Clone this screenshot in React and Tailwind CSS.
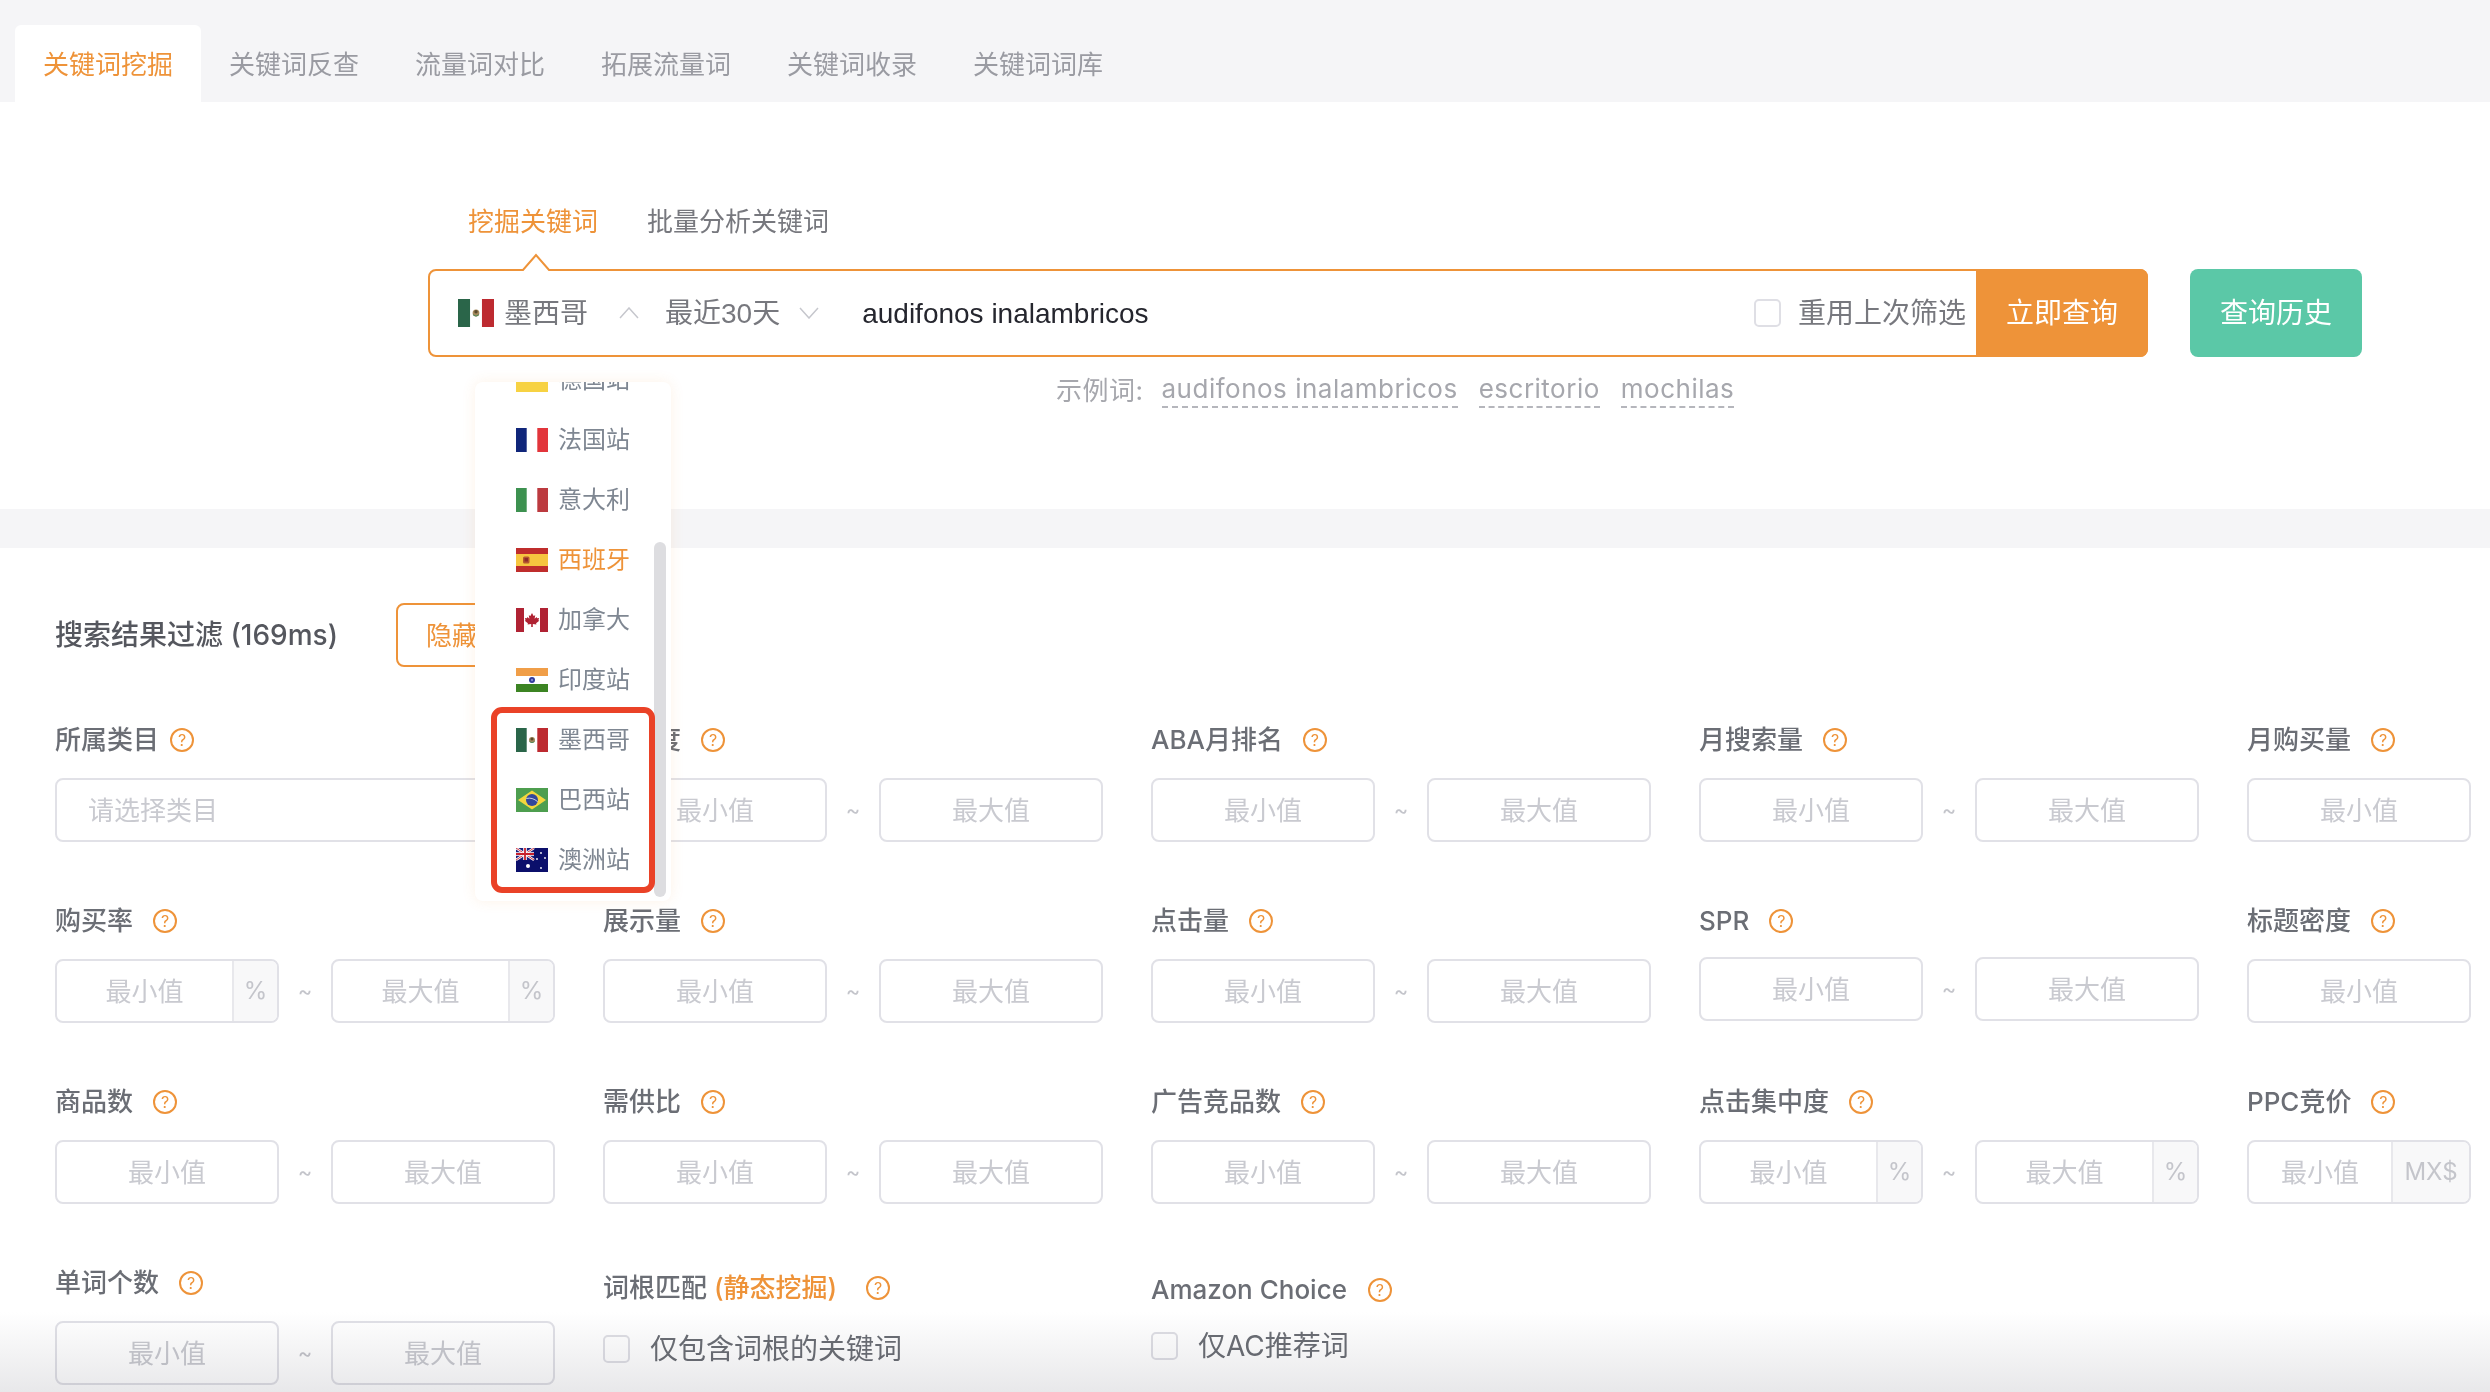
import React from 'react';

const tabs = ['关键词挖掘', '关键词反查', '流量词对比', '拓展流量词', '关键词收录', '关键词词库'];

// little flags for the site dropdown, all drawn on a 32x24 box
const FlagMexico = () => (
  <>
    <rect width="32" height="24" fill="#fff" />
    <rect width="10.7" height="24" fill="#2a6549" />
    <rect x="21.3" width="10.7" height="24" fill="#bd2a30" />
    <circle cx="16" cy="12" r="3" fill="#a5895c" />
    <circle cx="16" cy="11" r="1.5" fill="#5a4a2c" />
    <path d="M13.5 13.5q2.5 2.5 5 0" stroke="#3f8a5a" strokeWidth="0.8" fill="none" />
  </>
);
const FlagGermany = () => (
  <>
    <rect width="32" height="8" fill="#222" />
    <rect y="8" width="32" height="4" fill="#c8202c" />
    <rect y="12" width="32" height="12" fill="#f7d243" />
  </>
);
const FlagFrance = () => (
  <>
    <rect width="32" height="24" fill="#fff" />
    <rect width="10.7" height="24" fill="#10267a" />
    <rect x="21.3" width="10.7" height="24" fill="#e2353b" />
  </>
);
const FlagItaly = () => (
  <>
    <rect width="32" height="24" fill="#fff" />
    <rect width="10.7" height="24" fill="#3d9150" />
    <rect x="21.3" width="10.7" height="24" fill="#bc3a3f" />
  </>
);
const FlagSpain = () => (
  <>
    <rect width="32" height="24" fill="#bf2d2c" />
    <rect y="6" width="32" height="12" fill="#f6c53f" />
    <rect x="7" y="8.5" width="6.5" height="7" rx="1.5" fill="#b5562f" />
    <rect x="8.5" y="10" width="3.5" height="3.5" fill="#8f2b2b" />
  </>
);
const FlagCanada = () => (
  <>
    <rect width="32" height="24" fill="#fff" />
    <rect width="8" height="24" fill="#b02233" />
    <rect x="24" width="8" height="24" fill="#b02233" />
    <path d="M16 5l1.6 3 1.6-.8-.6 3.6 2-1.8.5 1.3 2-.3-.7 2.2.9.5-3.2 2.6.3 1.2-3.6-.4v3h-1.6v-3l-3.6.4.3-1.2-3.2-2.6.9-.5-.7-2.2 2 .3.5-1.3 2 1.8-.6-3.6 1.6.8z" fill="#b02233" />
  </>
);
const FlagIndia = () => (
  <>
    <rect width="32" height="24" fill="#fff" />
    <rect width="32" height="8" fill="#f09e48" />
    <rect y="16" width="32" height="8" fill="#3c8423" />
    <circle cx="16" cy="12" r="3" fill="#2f3a9c" />
    <circle cx="16" cy="12" r="1.2" fill="#7f88cf" />
  </>
);
const FlagBrazil = () => (
  <>
    <rect width="32" height="24" fill="#4d9e4f" />
    <path d="M16 2.5L30 12 16 21.5 2 12z" fill="#f4d63d" />
    <circle cx="16" cy="12" r="6" fill="#33479b" />
    <path d="M10.3 10.5q6-1.5 11.4 3.2" stroke="#d9dcec" strokeWidth="0.9" fill="none" />
  </>
);
const FlagAustralia = () => (
  <>
    <rect width="32" height="24" fill="#0b0f6b" />
    <rect width="18" height="12" fill="#1b1f7c" />
    <path d="M0 0l18 12M18 0L0 12" stroke="#fff" strokeWidth="2.4" />
    <path d="M0 0l18 12M18 0L0 12" stroke="#c8202c" strokeWidth="0.9" />
    <path d="M9 0v12M0 6h18" stroke="#fff" strokeWidth="3.6" />
    <path d="M9 0v12M0 6h18" stroke="#c8202c" strokeWidth="1.8" />
    <circle cx="12" cy="18" r="2" fill="#fff" />
    <circle cx="25" cy="5" r="0.9" fill="#fff" />
    <circle cx="21" cy="11" r="0.9" fill="#fff" />
    <circle cx="29" cy="10" r="0.9" fill="#fff" />
    <circle cx="25" cy="20" r="0.9" fill="#fff" />
  </>
);

const Flag = ({ children, className }) => (
  <svg viewBox="0 0 32 24" preserveAspectRatio="none" className={`shrink-0 ${className}`}>
    {children}
  </svg>
);

const sites = [
  { name: '德国站', flag: <FlagGermany /> },
  { name: '法国站', flag: <FlagFrance /> },
  { name: '意大利', flag: <FlagItaly /> },
  { name: '西班牙', flag: <FlagSpain />, active: true },
  { name: '加拿大', flag: <FlagCanada /> },
  { name: '印度站', flag: <FlagIndia /> },
  { name: '墨西哥', flag: <FlagMexico /> },
  { name: '巴西站', flag: <FlagBrazil /> },
  { name: '澳洲站', flag: <FlagAustralia /> },
];

const Help = () => (
  <span className="flex h-[24px] w-[24px] shrink-0 items-center justify-center rounded-full border-2 border-[#ee9339] text-[16px] font-normal leading-none text-[#ee9339]">
    ?
  </span>
);

const Label = ({ text, gap = 'gap-[20px]', children }) => (
  <div className={`flex h-[36px] items-center pt-[3px] ${gap} text-[26px] font-medium leading-[36px] text-[#6b6e75]`}>
    <span className="whitespace-nowrap">
      {text}
      {children}
    </span>
    <Help />
  </div>
);

const Box = ({ text, suffix, suffixWidth = 'w-[45px]' }) => (
  <div className="flex h-[64px] w-[224px] shrink-0 overflow-hidden rounded-[8px] border-2 border-[#e1e1e7] bg-white">
    <div className="flex flex-1 items-center justify-center text-[26px] text-[#c9cad0]">{text}</div>
    {suffix && (
      <div className={`flex ${suffixWidth} shrink-0 items-center justify-center border-l-2 border-[#e8e8ec] bg-[#f8f8f9] text-[24px] text-[#c4c5cb]`}>
        {suffix}
      </div>
    )}
  </div>
);

const Range = ({ suffix, maxSuffix, suffixWidth }) => (
  <div className="flex w-[500px] items-center justify-between">
    <Box text="最小值" suffix={suffix} suffixWidth={suffixWidth} />
    <span className="text-[22px] text-[#c4c5cb]">~</span>
    <Box text="最大值" suffix={maxSuffix} suffixWidth={suffixWidth} />
  </div>
);

const Field = ({ label, suffix, inputGap = 'mt-[22px]', suffixWidth }) => (
  <div>
    <Label text={label} />
    <div className={inputGap}>
      <Range suffix={suffix} maxSuffix={suffix} suffixWidth={suffixWidth} />
    </div>
  </div>
);

const Check = ({ text, className }) => (
  <div className={`flex items-center gap-[20px] ${className}`}>
    <span className="h-[28px] w-[27px] rounded-[5px] border-2 border-[#dfdfe5] bg-white" />
    <span className="text-[28px] leading-[36px] text-[#6b6e75]">{text}</span>
  </div>
);

export default function App() {
  return (
    <div className="relative h-[1392px] w-[2490px] overflow-hidden bg-white font-['Inter','Noto_Sans_CJK_SC',sans-serif]">
      {/* tabs */}
      <div className="flex h-[102px] items-end bg-[#f5f5f7] pl-[15px]">
        {tabs.map((t, i) => (
          <div
            key={t}
            className={`flex h-[77px] w-[186px] items-center justify-center rounded-t-[6px] pt-[1px] text-[26px] ${
              i === 0 ? 'bg-white text-[#ee9339]' : 'text-[#9a9ba2]'
            }`}
          >
            {t}
          </div>
        ))}
      </div>

      {/* search */}
      <div className="h-[407px] pl-[428px] pt-[102px]">
        <div className="ml-[40px] flex gap-[49px] text-[26px] leading-[36px]">
          <span className="text-[#ee9339]">挖掘关键词</span>
          <span className="text-[#77787e]">批量分析关键词</span>
        </div>
        <div className="relative mt-[29px] flex h-[88px] w-[1720px] items-center rounded-[8px] border-2 border-[#ee9339] pl-[28px] font-['Liberation_Sans','Noto_Sans_CJK_SC',sans-serif] text-[28px] text-[#77787e]">
          <svg viewBox="0 0 32 18" className="absolute left-[90px] top-[-18px] h-[18px] w-[32px]">
            <path d="M0 17h2.5L16 1l13.5 16H32v1H0z" fill="#fff" />
            <path d="M0 17h3L16 2l13 15h3" fill="none" stroke="#ee9339" strokeWidth="2" />
          </svg>
          <Flag className="h-[28px] w-[36px]">
            <FlagMexico />
          </Flag>
          <span className="ml-[10px] pt-[2px]">墨西哥</span>
          <svg viewBox="0 0 20 12" className="ml-[31px] h-[12px] w-[20px]">
            <path d="M1 11l9-10 9 10" fill="none" stroke="#c6c7cd" strokeWidth="1.5" />
          </svg>
          <span className="ml-[26px] pt-[2px]">最近30天</span>
          <svg viewBox="0 0 20 12" className="ml-[19px] h-[12px] w-[20px]">
            <path d="M1 1l9 10 9-10" fill="none" stroke="#c6c7cd" strokeWidth="1.5" />
          </svg>
          <span className="ml-[43px] flex-1 pt-[2px] text-[#25262e]">audifonos inalambricos</span>
          <span className="h-[28px] w-[27px] rounded-[5px] border-2 border-[#dfdfe5] bg-white" />
          <span className="ml-[17px] mr-[10px] pt-[2px]">重用上次筛选</span>
          <div className="-my-[2px] -mr-[2px] flex h-[88px] w-[172px] items-center justify-center rounded-r-[8px] bg-[#ee9339] pt-[2px] text-white">
            立即查询
          </div>
          <div className="absolute left-[1760px] top-[-2px] flex h-[88px] w-[172px] items-center justify-center rounded-[8px] bg-[#5bc8a7] pt-[2px] text-white">
            查询历史
          </div>
        </div>
        <div className="ml-[628px] mt-[15px] flex h-[36px] items-center text-[26px] tracking-[0.5px] text-[#a6a7ad]">
          <span className="mr-[18px]">示例词:</span>
          <span className="mr-[21px] border-b-2 border-dashed border-[#b5b6bc] leading-[34px]">audifonos inalambricos</span>
          <span className="mr-[21px] border-b-2 border-dashed border-[#b5b6bc] leading-[34px]">escritorio</span>
          <span className="border-b-2 border-dashed border-[#b5b6bc] leading-[34px]">mochilas</span>
        </div>
      </div>

      <div className="h-[39px] bg-[#f5f5f7]" />

      {/* filters */}
      <div className="pl-[55px] pt-[55px]">
        <div className="flex h-[64px] items-center">
          <div className="w-[341px] text-[28px] font-medium text-[#55575e]">搜索结果过滤 (169ms)</div>
          <div className="flex h-[64px] w-[164px] items-center justify-center rounded-[8px] border-2 border-[#ee9339] text-[26px] text-[#ee9339]">
            隐藏过滤
          </div>
        </div>

        <div className="mt-[53px] grid grid-cols-[repeat(5,500px)] gap-x-[48px] gap-y-[59px]">
          <div>
            <Label text="所属类目" gap="gap-[11px]" />
            <div className="mt-[22px] flex h-[64px] w-[500px] items-center rounded-[8px] border-2 border-[#e1e1e7] pl-[31px] text-[26px] text-[#c9cad0]">
              请选择类目
            </div>
          </div>
          <Field label="竞争度" />
          <Field label="ABA月排名" />
          <Field label="月搜索量" />
          <Field label="月购买量" />

          <Field label="购买率" suffix="%" />
          <Field label="展示量" />
          <Field label="点击量" />
          <Field label="SPR" inputGap="mt-[20px]" />
          <Field label="标题密度" />

          <Field label="商品数" />
          <Field label="需供比" />
          <Field label="广告竞品数" />
          <Field label="点击集中度" suffix="%" />
          <Field label="PPC竞价" suffix="MX$" suffixWidth="w-[78px]" />

          <Field label="单词个数" />
          <div className="pt-[5px]">
            <Label text="词根匹配 " gap="gap-[29px]">
              <span className="text-[#ee9339]">(静态挖掘)</span>
            </Label>
            <Check text="仅包含词根的关键词" className="mt-[27px]" />
          </div>
          <div className="pt-[7px]">
            <Label text="Amazon Choice" gap="gap-[21px]" />
            <Check text="仅AC推荐词" className="mt-[22px]" />
          </div>
        </div>
      </div>

      {/* site dropdown, open over the page */}
      <div className="absolute left-[475px] top-[382px] h-[519px] w-[196px] overflow-hidden rounded-[8px] bg-white shadow-[0_0_14px_rgba(238,147,57,0.12)]">
        <div className="-mt-[32px]">
          {sites.map((s) => (
            <div key={s.name} className="flex h-[60px] items-center gap-[10px] pl-[41px]">
              <Flag className="h-[24px] w-[32px]">{s.flag}</Flag>
              <span className={`text-[24px] ${s.active ? 'text-[#ee9339]' : 'text-[#7f8792]'}`}>{s.name}</span>
            </div>
          ))}
        </div>
        <div className="absolute left-[179px] top-[160px] h-[355px] w-[12px] rounded-full bg-[#dddde0]" />
        <div className="absolute left-[16px] top-[325px] h-[186px] w-[164px] rounded-[11px] border-[6px] border-[#ea4227]" />
      </div>

      {/* fade at the bottom edge */}
      <div className="pointer-events-none absolute bottom-0 left-0 h-[80px] w-full bg-gradient-to-b from-white to-[#e8e8ea] mix-blend-multiply" />
    </div>
  );
}
